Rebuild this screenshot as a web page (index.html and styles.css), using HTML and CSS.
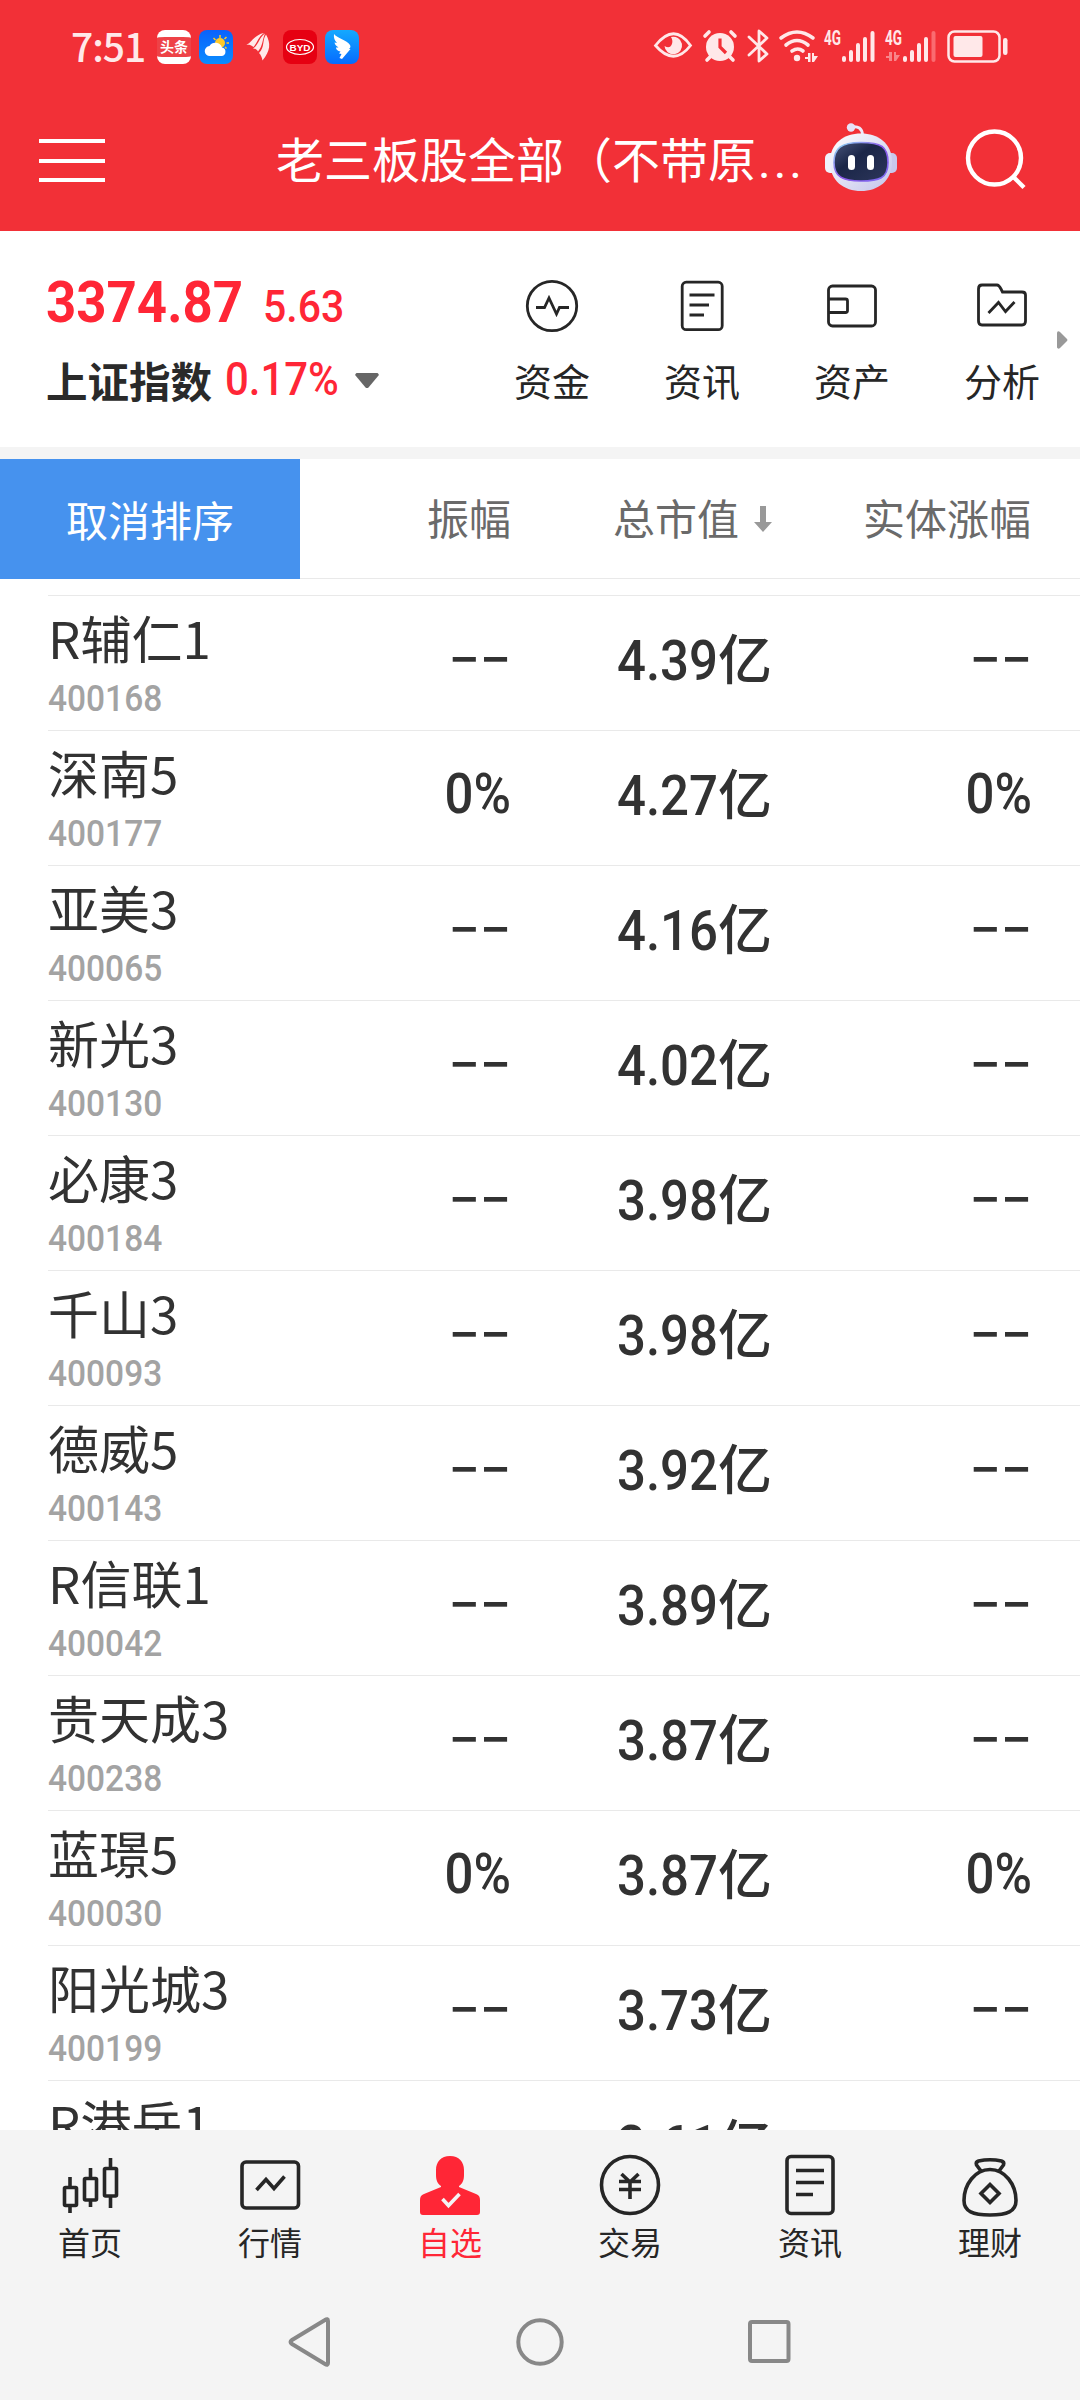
FILE: index.html
```html
<!DOCTYPE html>
<html lang="zh-CN">
<head>
    <meta charset="UTF-8">
    <meta name="viewport" content="width=device-width, initial-scale=1.0">
    <title>自选</title>
    <link rel="stylesheet" href="styles.css">
</head>
<body>
    <header class="header">
        <div class="status-bar">
            <span class="time">7:51</span>
            <div class="status-apps">
                <span class="toutiao">头条</span>
                <svg width="34" height="34" viewBox="0 0 34 34">
                    <defs><linearGradient id="sky" x1="0" y1="0" x2="0" y2="1"><stop offset="0" stop-color="#0a62fb"/><stop offset="1" stop-color="#0a8cff"/></linearGradient></defs>
                    <rect width="34" height="34" rx="8" fill="url(#sky)"/>
                    <path d="M21 5v3M14.500 8l2 2M27.500 7l-2 2M30 13h-2.500M27.500 18.500l-1.500-1.500" stroke="#ffc928" stroke-width="1.500"/>
                    <circle cx="21" cy="13" r="5" fill="#ffc928"/>
                    <path d="M11 26a5 5 0 0 1-.5-10 7 7 0 0 1 12.500 1.500A4.300 4.300 0 0 1 22.500 26z" fill="#fff"/>
                </svg>
                <svg width="34" height="34" viewBox="0 0 34 34" fill="#ffeaea">
                    <path d="M4 15C10 15 12 5 23 3c-6 4-6 9-10.500 14-3-2.500-5-2.500-8.500-2z"/>
                    <path d="M12 18.500c6-4 6-11 12-15-3 7-2 12-7 18-1-2-3-3-5-3z"/>
                    <path d="M18 23c6-6 3-13 7-18.500 5 9 4.500 16-3.500 26-.5-3-1.500-5.500-3.500-7.500z"/>
                </svg>
                <svg width="34" height="34" viewBox="0 0 34 34">
                    <rect width="34" height="34" rx="8" fill="#e60012"/>
                    <ellipse cx="17" cy="17" rx="13.500" ry="7.500" fill="none" stroke="#fff" stroke-width="1.200"/>
                    <text x="17" y="20.500" class="byd" text-anchor="middle" textLength="21" lengthAdjust="spacingAndGlyphs">BYD</text>
                </svg>
                <svg width="34" height="34" viewBox="0 0 34 34">
                    <defs><linearGradient id="ding" x1="0" y1="0" x2="0" y2="1"><stop offset="0" stop-color="#14a9ff"/><stop offset="1" stop-color="#066bff"/></linearGradient></defs>
                    <rect width="34" height="34" rx="8" fill="url(#ding)"/>
                    <path d="M9 4c3 4 13 6 16 11 1 2 0 3-1 4h1.500L17 29l-2.500-1 2-4-2.500-.5 1.500-2c-3-.5-4.500-2-4.500-4h2.500c-2.500-1.500-3.500-3-4-5l2.500.5C9.500 10.500 8.500 8 9 4z" fill="#fff"/>
                </svg>
            </div>
            <svg class="status-icons" width="356" height="36" viewBox="0 0 356 36">
                <!-- eye -->
                <path d="M1.500 16.500Q20-7 36.500 16.500Q20 38 1.500 16.500z" fill="none" stroke="#ffe8e9" stroke-width="2.800"/>
                <path d="M17 8a8.800 8.800 0 1 1-6.500 9q5 3 7-1t-.5-8z" fill="#ffe8e9"/>
                <!-- alarm -->
                <circle cx="66" cy="18" r="14" fill="#ffe8e9"/>
                <path d="M66 9.500v8.500l6 6" fill="none" stroke="#f23037" stroke-width="3.200"/>
                <path d="M51 7l4-4M81 7l-4-4M56 28l-3 3M76 28l3 3" stroke="#ffe8e9" stroke-width="3.600" stroke-linecap="round"/>
                <!-- bluetooth -->
                <path d="M95 8l18 17-8 7V2l8 7-18 17" fill="none" stroke="#ffe8e9" stroke-width="2.800" stroke-linejoin="round" stroke-linecap="round"/>
                <!-- wifi -->
                <g fill="none" stroke="#ffe8e9" stroke-width="3.600" stroke-linecap="round">
                    <path d="M127 9q16-12 32 0M132 16q11-9 22 0M138 22q6-4 11 0"/>
                </g>
                <circle cx="143" cy="29" r="3.200" fill="#ffe8e9"/>
                <path d="M151 28h3v-4h2.500v9h-2.500v-3h-3zM158 24h2v3h4l-4 6h-2z" fill="#ffe8e9"/>
                <!-- signal 1 -->
                <text x="170" y="15.500" class="net" textLength="17" lengthAdjust="spacingAndGlyphs">4G</text>
                <g stroke="#ffe8e9" stroke-width="4" stroke-linecap="round">
                    <path d="M190 29v2M197 23v8M204 16v15M211 10v21M218.500 4v27"/>
                </g>
                <!-- signal 2 -->
                <text x="231" y="15.500" class="net" textLength="17" lengthAdjust="spacingAndGlyphs">4G</text>
                <path d="M232 27h3v-4h3v9h-3v-3h-3zM240 23h2v3h4l-4 6h-2z" fill="#f8858a"/>
                <g stroke="#ffe8e9" stroke-width="4" stroke-linecap="round">
                    <path d="M251 29v2M258 23v8M265 16v15M272 10v21"/>
                    <path d="M279.500 4v27" stroke="#fa6b70"/>
                </g>
                <!-- battery -->
                <rect x="294.500" y="2.500" width="51" height="30" rx="6" fill="none" stroke="#ffe8e9" stroke-width="2.500"/>
                <rect x="299.500" y="7" width="29" height="21" rx="2" fill="#ffe8e9"/>
                <rect x="349" y="9" width="4.500" height="17" rx="2.200" fill="#ffe8e9"/>
            </svg>
        </div>
        <div class="title-bar">
            <svg class="menu" width="66" height="46" viewBox="0 0 66 46"><path d="M0 4h66M0 24h66M0 43h66" stroke="#fff" stroke-width="4"/></svg>
            <h1 class="title">老三板股全部（不带原<span class="dots">...</span></h1>
            <svg class="robot" width="72" height="70" viewBox="0 0 72 70">
                <defs>
                    <linearGradient id="head" x1="0" y1="0" x2="1" y2="1"><stop offset="0" stop-color="#fff"/><stop offset="1" stop-color="#c2c3ea"/></linearGradient>
                    <linearGradient id="rim" x1="0" y1="0" x2="1" y2="1"><stop offset="0" stop-color="#8fe2f5"/><stop offset=".5" stop-color="#8b55e8"/><stop offset="1" stop-color="#7b6df0"/></linearGradient>
                    <linearGradient id="face" x1="0" y1="0" x2="1" y2="1"><stop offset="0" stop-color="#49557b"/><stop offset=".4" stop-color="#1b2648"/><stop offset="1" stop-color="#2c365a"/></linearGradient>
                </defs>
                <path d="M26 5q11-2 11.500 8" fill="none" stroke="#eee9fa" stroke-width="3"/>
                <circle cx="26" cy="5.500" r="4.200" fill="#e6e2f8"/>
                <rect x="0" y="31" width="12" height="20" rx="5" fill="#eff2fc"/>
                <rect x="60" y="31" width="12" height="20" rx="5" fill="#c8c8ec"/>
                <path d="M36 11.500C53 11.500 67 21 67 40S53 69 36 69 5 59 5 40 19 11.500 36 11.500z" fill="url(#head)"/>
                <path d="M36 20.500c20 0 27 4 27 20s-9 18.500-27 18.500-27-4-27-18.500 7-20 27-20z" fill="url(#face)" stroke="url(#rim)" stroke-width="1.600"/>
                <rect x="23" y="33" width="7" height="15" rx="3.500" fill="#fff"/>
                <rect x="42" y="33" width="7" height="15" rx="3.500" fill="#fff"/>
            </svg>
            <svg class="search" width="60" height="62" viewBox="0 0 60 62"><circle cx="28.500" cy="30" r="26.500" fill="none" stroke="#fff" stroke-width="4.400"/><path d="M47 48.500l11 11" stroke="#fff" stroke-width="4.400"/></svg>
        </div>
    </header>

    <section class="summary">
        <div class="index">
            <div class="index-top"><span class="index-value"><b>3374.87</b></span><span class="index-change"><b>5.63</b></span></div>
            <div class="index-bottom">
                <span class="index-name">上证指数</span><span class="index-percent"><b>0.17%</b></span>
                <svg width="24" height="16" viewBox="0 0 24 16"><path d="M1.500 0h21q2 1 1 2.500L13.500 14.500q-1.500 1-3 0L.5 2.500Q-.5 1 1.500 0z" fill="#666"/></svg>
            </div>
        </div>
        <nav class="shortcuts">
            <div class="shortcut">
                <svg width="60" height="60" viewBox="0 0 60 60"><circle cx="30" cy="30" r="24.700"/><path d="M14 31.500h8.500L27 22l7.500 16 3-6.500H47"/></svg>
                <span>资金</span>
            </div>
            <div class="shortcut">
                <svg width="60" height="60" viewBox="0 0 60 60"><rect x="10.200" y="6.200" width="40" height="47.500" rx="4"/><path d="M17.500 19h25M17.500 29H37M17.500 39H32"/></svg>
                <span>资讯</span>
            </div>
            <div class="shortcut">
                <svg width="60" height="60" viewBox="0 0 60 60"><rect x="6.500" y="10" width="47" height="40" rx="4"/><path d="M7 23h16.500q2 0 2 2v9.500q0 2-2 2H7"/></svg>
                <span>资产</span>
            </div>
            <div class="shortcut">
                <svg width="60" height="60" viewBox="0 0 60 60"><path d="M10 9h15q2 0 4 4l1.500 3H50q3.500 0 3.500 3v26q0 4-3.500 4H10q-3.500 0-3.500-4V13q0-4 3.500-4z"/><path d="M16.500 37l10-10.500 7 9L42.500 26"/></svg>
                <span>分析</span>
            </div>
        </nav>
        <svg class="more" width="11" height="18" viewBox="0 0 11 18"><path d="M0 1.500Q1-.5 3 1L10 8q1 1 0 2l-7 7q-2 1.500-3-.5z" fill="#999"/></svg>
    </section>

    <main class="stocks">
        <div class="columns">
            <div class="cancel-sort">取消排序</div>
            <div class="col">振幅</div>
            <div class="col sorted">总市值<svg width="18" height="26" viewBox="0 0 18 26"><path d="M6 0h6v16h6l-9 10-9-10h6z" fill="#999"/></svg></div>
            <div class="col last">实体涨幅</div>
        </div>
        <div class="rows">
            <div class="row">
                <div class="stock"><span class="name">R辅仁1</span><span class="code">400168</span></div>
                <div class="cell none">--</div><div class="cell cap"><b>4.39</b><i>亿</i></div><div class="cell none">--</div>
            </div>
            <div class="row">
                <div class="stock"><span class="name">深南5</span><span class="code">400177</span></div>
                <div class="cell"><b>0%</b></div><div class="cell cap"><b>4.27</b><i>亿</i></div><div class="cell"><b>0%</b></div>
            </div>
            <div class="row">
                <div class="stock"><span class="name">亚美3</span><span class="code">400065</span></div>
                <div class="cell none">--</div><div class="cell cap"><b>4.16</b><i>亿</i></div><div class="cell none">--</div>
            </div>
            <div class="row">
                <div class="stock"><span class="name">新光3</span><span class="code">400130</span></div>
                <div class="cell none">--</div><div class="cell cap"><b>4.02</b><i>亿</i></div><div class="cell none">--</div>
            </div>
            <div class="row">
                <div class="stock"><span class="name">必康3</span><span class="code">400184</span></div>
                <div class="cell none">--</div><div class="cell cap"><b>3.98</b><i>亿</i></div><div class="cell none">--</div>
            </div>
            <div class="row">
                <div class="stock"><span class="name">千山3</span><span class="code">400093</span></div>
                <div class="cell none">--</div><div class="cell cap"><b>3.98</b><i>亿</i></div><div class="cell none">--</div>
            </div>
            <div class="row">
                <div class="stock"><span class="name">德威5</span><span class="code">400143</span></div>
                <div class="cell none">--</div><div class="cell cap"><b>3.92</b><i>亿</i></div><div class="cell none">--</div>
            </div>
            <div class="row">
                <div class="stock"><span class="name">R信联1</span><span class="code">400042</span></div>
                <div class="cell none">--</div><div class="cell cap"><b>3.89</b><i>亿</i></div><div class="cell none">--</div>
            </div>
            <div class="row">
                <div class="stock"><span class="name">贵天成3</span><span class="code">400238</span></div>
                <div class="cell none">--</div><div class="cell cap"><b>3.87</b><i>亿</i></div><div class="cell none">--</div>
            </div>
            <div class="row">
                <div class="stock"><span class="name">蓝璟5</span><span class="code">400030</span></div>
                <div class="cell"><b>0%</b></div><div class="cell cap"><b>3.87</b><i>亿</i></div><div class="cell"><b>0%</b></div>
            </div>
            <div class="row">
                <div class="stock"><span class="name">阳光城3</span><span class="code">400199</span></div>
                <div class="cell none">--</div><div class="cell cap"><b>3.73</b><i>亿</i></div><div class="cell none">--</div>
            </div>
            <div class="row">
                <div class="stock"><span class="name">R港岳1</span></div>
                <div class="cell"></div><div class="cell cap"><b>3.61</b><i>亿</i></div><div class="cell"></div>
            </div>
        </div>
    </main>

    <footer class="footer">
        <nav class="tabs">
            <div class="tab">
                <svg width="66" height="66" viewBox="0 0 66 66"><rect x="7.500" y="32.500" width="12" height="18" rx="1"/><rect x="27.500" y="23.500" width="12" height="21.500" rx="1"/><rect x="47.500" y="13.500" width="12" height="27.500" rx="1"/><path d="M13 22v10M13 51v7M33.500 13v10M33.500 45v7M53.500 3v10M53.500 41v12"/></svg>
                <span>首页</span>
            </div>
            <div class="tab">
                <svg width="66" height="66" viewBox="0 0 66 66"><rect x="5" y="7" width="56.500" height="46" rx="4"/><path d="M19.500 35L29 24.500l8 9L47.500 21.500"/></svg>
                <span>行情</span>
            </div>
            <div class="tab active">
                <svg width="66" height="66" viewBox="0 0 66 66"><path d="M33 1c9 0 14 6 14 14v5c0 6-2 9-5 11v1l17 7c3 1 4 3 4 6v12q0 3-3 3H6q-3 0-3-3V45c0-3 1-5 4-6l17-7v-1c-3-2-5-5-5-11v-5C19 7 24 1 33 1z" fill="#ff2636" stroke="none"/><path d="M25.500 44l6 6.500 11-11.500" stroke="#f4f4f4"/></svg>
                <span>自选</span>
            </div>
            <div class="tab">
                <svg width="66" height="66" viewBox="0 0 66 66"><circle cx="33" cy="30" r="28.500"/><path d="M24.500 19l8.500 8 8.500-8M22 26.500h22M22 34.500h22M33 26v18"/></svg>
                <span>交易</span>
            </div>
            <div class="tab">
                <svg width="66" height="66" viewBox="0 0 66 66"><rect x="10" y="1.500" width="46" height="57" rx="4"/><path d="M19 15.500h28M19 27.500h28M19 39.500h17"/></svg>
                <span>资讯</span>
            </div>
            <div class="tab">
                <svg width="66" height="66" viewBox="0 0 66 66"><path d="M33 14.500c15 0 26 15 26 31 0 11-9 14.500-26 14.500S7 56.500 7 45.500c0-16 11-31 26-31zM24 16l-4.500-6q-1-3 2-4 11.500-2.500 23 0 3 1 2 4L42 16M33 29.500l9 9-9 9-9-9z"/></svg>
                <span>理财</span>
            </div>
        </nav>
        <div class="system-nav">
            <svg width="48" height="52" viewBox="0 0 48 52"><path d="M38 4q3-2 3 1v42q0 3-3 1L5 28q-3-2 0-4z"/></svg>
            <svg width="48" height="52" viewBox="0 0 48 52"><circle cx="24" cy="26" r="21.700"/></svg>
            <svg width="48" height="52" viewBox="0 0 48 52"><rect x="5" y="6" width="38.500" height="39" rx="2"/></svg>
        </div>
    </footer>
</body>
</html>
```
FILE: styles.css
```css
:root {
    --red: #f23037;
    --up: #ff2636;
    --text: #323232;
    --line: #e9e9e9;
    --bar: #f4f4f4;
    --cjk: "Noto Sans CJK SC", sans-serif;
    --digits: Roboto, "Noto Sans CJK SC", sans-serif;
}
* {
    box-sizing: border-box;
}
body {
    margin: 0;
    width: 1080px;
    height: 2400px;
    display: flex;
    flex-direction: column;
    overflow: hidden;
    background-color: #fff;
    color: var(--text);
    font-family: var(--cjk);
}
svg {
    display: block;
    flex: none;
    overflow: visible;
}
/* narrow digits */
b {
    display: inline-block;
    font-weight: inherit;
    transform: scaleX(.91);
    transform-origin: left;
}
.header {
    height: 231px;
    flex: none;
    background-color: var(--red);
    color: #fff;
}
.status-bar {
    height: 94px;
    padding: 0 70px 0 71px;
    display: flex;
    align-items: center;
}
.time {
    width: 86px;
    font-size: 39px;
    font-weight: 500;
    line-height: 90px;
    letter-spacing: -1px;
    color: #ffe8e9;
    padding-bottom: 4px;
}
.status-apps {
    display: flex;
    gap: 8px;
    flex: 1;
}
.toutiao {
    width: 34px;
    height: 34px;
    border-radius: 8px;
    border: solid #fff;
    border-width: 7px 0;
    background-color: #ee4247;
    font-size: 14px;
    font-weight: bold;
    line-height: 19px;
    text-align: center;
}
.byd {
    font: bold 9px "Liberation Sans", sans-serif;
    fill: #fff;
}
.net {
    font: bold 20px Roboto, sans-serif;
    fill: #ffe8e9;
}
.title-bar {
    height: 134px;
    padding-left: 39px;
    display: flex;
    align-items: center;
}
.menu {
    margin-bottom: 3px;
}
.title {
    width: 522px;
    margin: 0 0 0 171px;
    padding-bottom: 4px;
    font-size: 48px;
    font-weight: 400;
    line-height: 72px;
    white-space: nowrap;
}
.dots {
    margin-left: 2px;
    font-family: Roboto, sans-serif;
    letter-spacing: 3px;
}
.robot {
    margin: 0 69px 8px 27px;
}
.search {
    margin-bottom: 4px;
}
.summary {
    height: 228px;
    flex: none;
    display: flex;
    border-bottom: 12px solid var(--bar);
}
.index {
    width: 430px;
    padding: 33px 0 0 46px;
}
.index-top {
    display: flex;
    align-items: baseline;
    height: 72px;
    color: var(--up);
    font-family: var(--digits);
    line-height: 76px;
}
.index-value {
    width: 217px;
    font-size: 58px;
    font-weight: 700;
}
.index-change {
    padding-top: 4px;
    margin-bottom: -4px;
    font-size: 45px;
    font-weight: 500;
}
.index-bottom {
    display: flex;
    align-items: center;
    height: 90px;
}
.index-name {
    width: 179px;
    padding-bottom: 3px;
    font-size: 41.500px;
    font-weight: 700;
    color: #2a2a2a;
}
.index-percent {
    width: 130px;
    padding-bottom: 5px;
    color: var(--up);
    font: 500 46px var(--digits);
}
.shortcuts {
    display: flex;
    margin-left: 47px;
}
.shortcut {
    width: 150px;
    padding-top: 45px;
    display: flex;
    flex-direction: column;
    align-items: center;
    font-size: 38px;
    line-height: 56px;
    gap: 16px;
    color: #262626;
}
.shortcut svg, .tab svg {
    fill: none;
    stroke: #262626;
    stroke-width: 2.800;
}
.more {
    margin: 100px 0 0 -20px;
}
.stocks {
    flex: 1;
    min-height: 0;
    display: flex;
    flex-direction: column;
}
.columns {
    height: 120px;
    flex: none;
    display: grid;
    grid-template-columns: 300px 211px 261px 259px;
    border-bottom: 1px solid var(--line);
    font-size: 42px;
    line-height: 115px;
    color: #6a6a6a;
    text-align: right;
}
.cancel-sort {
    height: 120px;
    line-height: 119px;
    background-color: #4692ee;
    color: #fff;
    text-align: center;
}
.sorted {
    display: flex;
    justify-content: flex-end;
    align-items: center;
    height: 115px;
    gap: 15px;
}
.sorted svg {
    margin-top: 4px;
}
.rows {
    flex: 1;
    min-height: 0;
    margin-left: 48px;
    padding-top: 16px;
    overflow: hidden;
}
.row {
    height: 135px;
    border-top: 1px solid var(--line);
    display: grid;
    grid-template-columns: 252px 211px 261px 260px;
}
.stock {
    display: flex;
    flex-direction: column;
    padding-top: 5px;
}
.name {
    font-size: 51px;
    line-height: 72px;
    white-space: nowrap;
}
.code {
    font-family: var(--digits);
    font-size: 37px;
    font-weight: 500;
    line-height: 52px;
    color: #a3a3a3;
    transform: scaleX(.905);
    transform-origin: left;
}
.cell {
    height: 126px;
    text-align: right;
    font-family: var(--digits);
    font-size: 56px;
    font-weight: 500;
    line-height: 126px;
}
.cell b {
    transform-origin: right;
}
.cap {
    line-height: 121px;
}
.cap i {
    font-family: var(--cjk);
    font-size: 54px;
    font-style: normal;
}
/* placeholder for stocks without a quote */
.none {
    font-family: var(--cjk);
    font-size: 94px;
    font-weight: 300;
    line-height: 97px;
    letter-spacing: 0;
}
.footer {
    height: 270px;
    flex: none;
    background-color: var(--bar);
}
.tabs {
    display: flex;
    height: 154px;
    padding-top: 25px;
}
.tab {
    width: 180px;
    display: flex;
    flex-direction: column;
    align-items: center;
    font-size: 32px;
    line-height: 40px;
    color: #262626;
}
.tab svg {
    stroke-width: 3.600;
}
.active {
    color: var(--up);
}
.system-nav {
    display: flex;
    justify-content: center;
    gap: 181px;
    padding-top: 32px;
}
.system-nav svg {
    fill: none;
    stroke: #888;
    stroke-width: 4;
    stroke-linejoin: round;
}
```
